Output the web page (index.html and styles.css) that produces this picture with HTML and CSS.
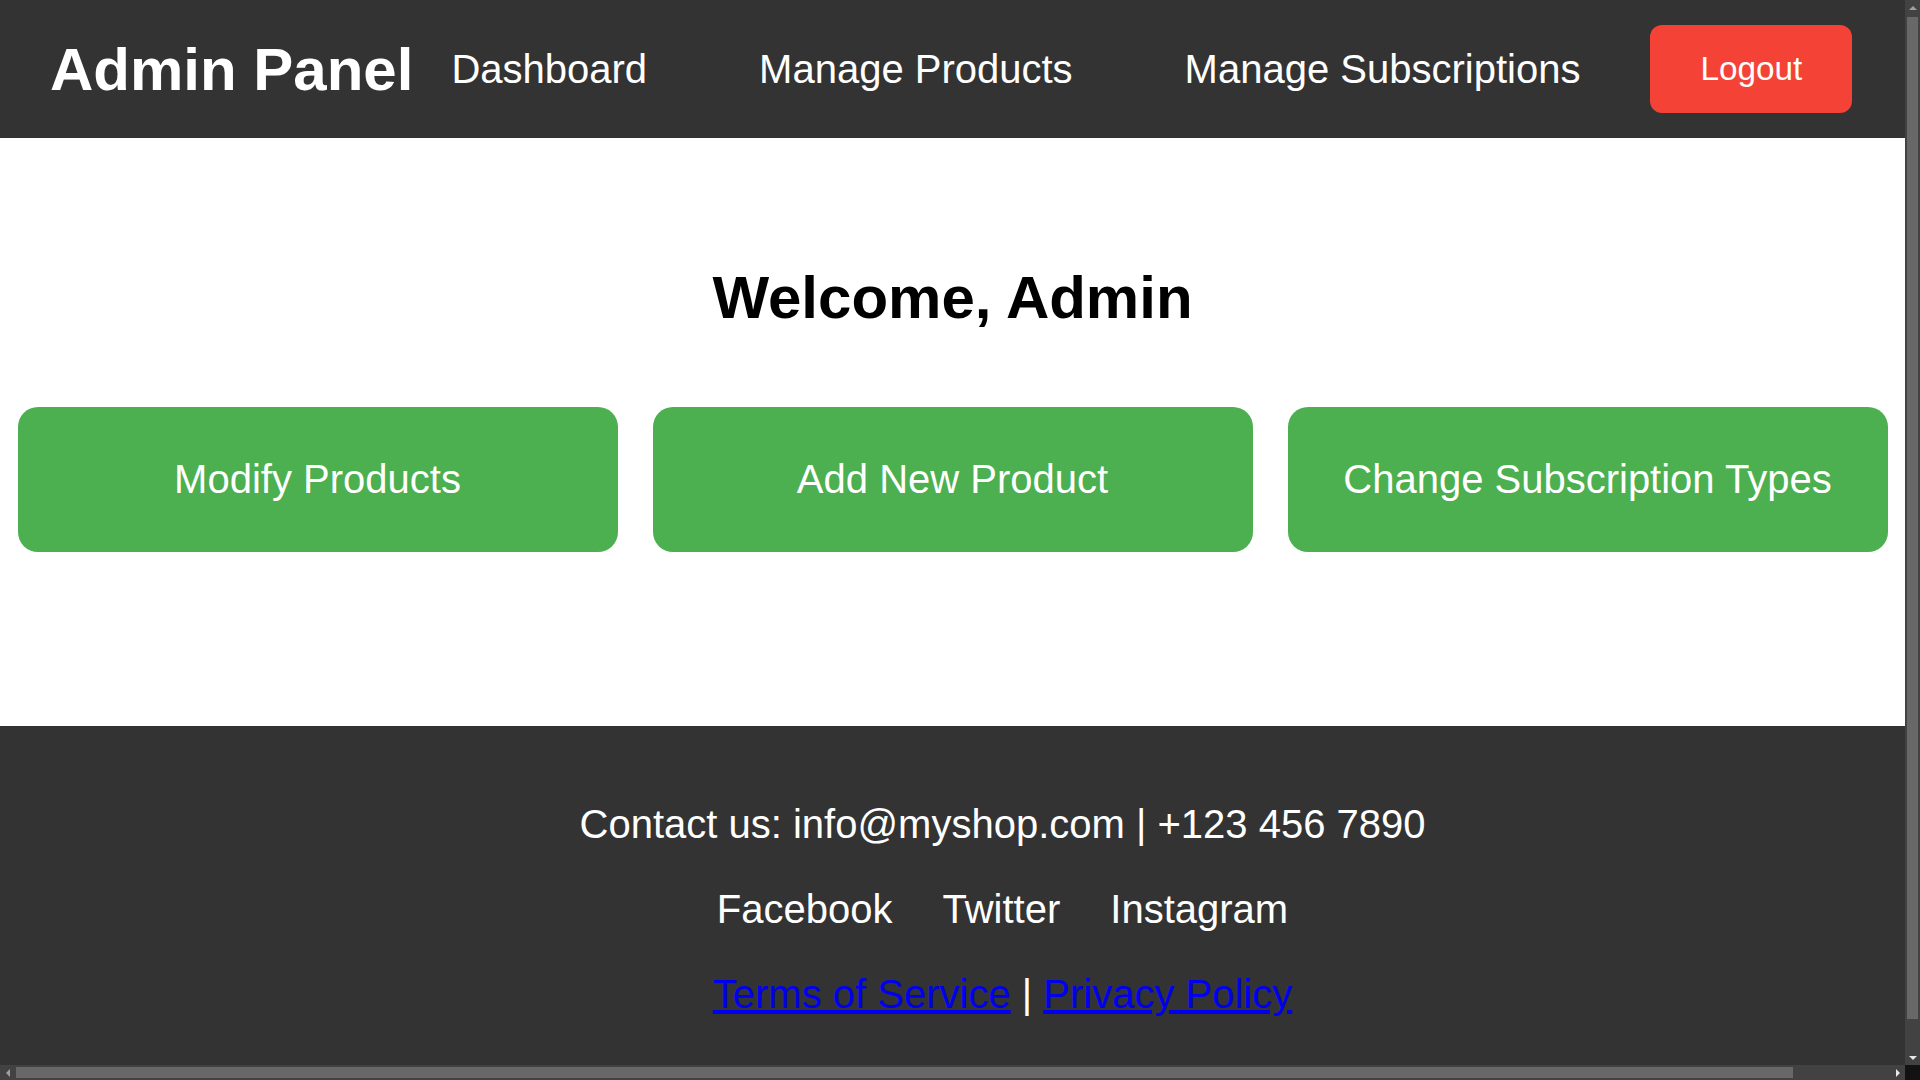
FILE: index.html
```html
<!DOCTYPE html>
<html lang="en">
<head>
<meta charset="utf-8">
<title>Admin Panel</title>
<link rel="stylesheet" href="styles.css">
</head>
<body>
<div class="frame">
  <div class="viewport">
    <header class="topbar">
      <div class="logo">Admin Panel</div>
      <nav class="nav">
        <a href="#" class="nav-link">Dashboard</a>
        <a href="#" class="nav-link">Manage Products</a>
        <a href="#" class="nav-link">Manage Subscriptions</a>
      </nav>
      <button class="logout">Logout</button>
    </header>
    <main class="main">
      <h2 class="welcome">Welcome, Admin</h2>
      <div class="actions">
        <a href="#" class="card">Modify Products</a>
        <a href="#" class="card">Add New Product</a>
        <a href="#" class="card">Change Subscription Types</a>
      </div>
    </main>
    <footer class="footer">
      <p class="footer-line">Contact us: info@myshop.com | +123 456 7890</p>
      <p class="footer-line social">
        <a href="#" class="social-link">Facebook</a>
        <a href="#" class="social-link">Twitter</a>
        <a href="#" class="social-link">Instagram</a>
      </p>
      <p class="footer-line"><a href="#" class="legal-link">Terms of Service</a> | <a href="#" class="legal-link">Privacy Policy</a></p>
    </footer>
  </div>
  <div class="vscroll">
    <div class="sb-btn"><span class="tri tri-up"></span></div>
    <div class="vtrack"><div class="vthumb"></div></div>
    <div class="sb-btn"><span class="tri tri-down"></span></div>
  </div>
  <div class="hscroll">
    <div class="sb-btn"><span class="tri tri-left"></span></div>
    <div class="htrack"><div class="hthumb"></div></div>
    <div class="sb-btn"><span class="tri tri-right"></span></div>
  </div>
  <div class="corner"></div>
</div>
</body>
</html>
```
FILE: styles.css
```css
html, body {
  margin: 0;
  height: 100%;
  overflow: hidden;
}

body {
  background: #ffffff;
  color: #000000;
  font-family: "Liberation Sans", Arial, sans-serif;
  font-size: 40px;
}

.frame {
  display: grid;
  grid-template-columns: 1905px 15px;
  grid-template-rows: 1065px 15px;
  width: 1920px;
  height: 1080px;
}

.viewport {
  overflow: hidden;
  background: #ffffff;
}

.topbar {
  width: 100%;
  padding: 25px 50px;
  background: #333333;
  display: flex;
  align-items: center;
}

.logo {
  color: #ffffff;
  font-size: 60px;
  font-weight: bold;
  white-space: nowrap;
}

.nav {
  display: flex;
  gap: 112px;
  margin-left: 38px;
}

.nav-link {
  color: #ffffff;
  text-decoration: none;
  font-size: 40px;
  white-space: nowrap;
}

.logout {
  margin-left: 70px;
  background: #f44336;
  color: #ffffff;
  border: none;
  border-radius: 12px;
  padding: 25px 50px;
  font-family: "Liberation Sans", Arial, sans-serif;
  font-size: 33.33px;
  cursor: pointer;
}

.main {
  background: #ffffff;
  padding: 75px 0 75px;
}

.welcome {
  margin: 50px 0;
  text-align: center;
  font-size: 60px;
  font-weight: bold;
  color: #000000;
}

.actions {
  display: flex;
  justify-content: space-around;
  margin: 75px 0 99px;
}

.card {
  width: 600px;
  box-sizing: border-box;
  padding: 50px 0;
  background: #4caf50;
  color: #ffffff;
  text-decoration: none;
  text-align: center;
  border-radius: 20px;
  font-size: 40px;
}

.footer {
  width: 100%;
  padding: 36px 50px 35px;
  background: #333333;
  color: #ffffff;
  text-align: center;
}

.footer-line {
  margin: 40px 0;
}

.social {
  display: flex;
  justify-content: center;
  gap: 50px;
}

.social-link {
  color: #ffffff;
  text-decoration: none;
}

.legal-link {
  color: #0000ee;
  text-decoration: underline;
}

/* scrollbars */
.vscroll {
  display: flex;
  flex-direction: column;
  background: #424242;
}

.hscroll {
  display: flex;
  background: #424242;
}

.corner {
  background: #121212;
}

.sb-btn {
  flex: 0 0 15px;
  width: 15px;
  height: 15px;
  display: flex;
  align-items: center;
  justify-content: center;
}

.vtrack {
  flex: 1;
  padding: 2px 2px 0 2px;
}

.vthumb {
  height: 1002px;
  background: #686868;
}

.htrack {
  flex: 1;
  padding: 2px 0 2px 1px;
}

.hthumb {
  width: 1777px;
  height: 100%;
  background: #686868;
}

.tri {
  width: 0;
  height: 0;
  border-style: solid;
}

.tri-up {
  border-width: 0 4px 4px 4px;
  border-color: transparent transparent #a0a0a0 transparent;
}

.tri-down {
  border-width: 4px 4px 0 4px;
  border-color: #e8e8e8 transparent transparent transparent;
}

.tri-left {
  border-width: 4px 4px 4px 0;
  border-color: transparent #a0a0a0 transparent transparent;
}

.tri-right {
  border-width: 4px 0 4px 4px;
  border-color: transparent transparent transparent #e8e8e8;
}
```
